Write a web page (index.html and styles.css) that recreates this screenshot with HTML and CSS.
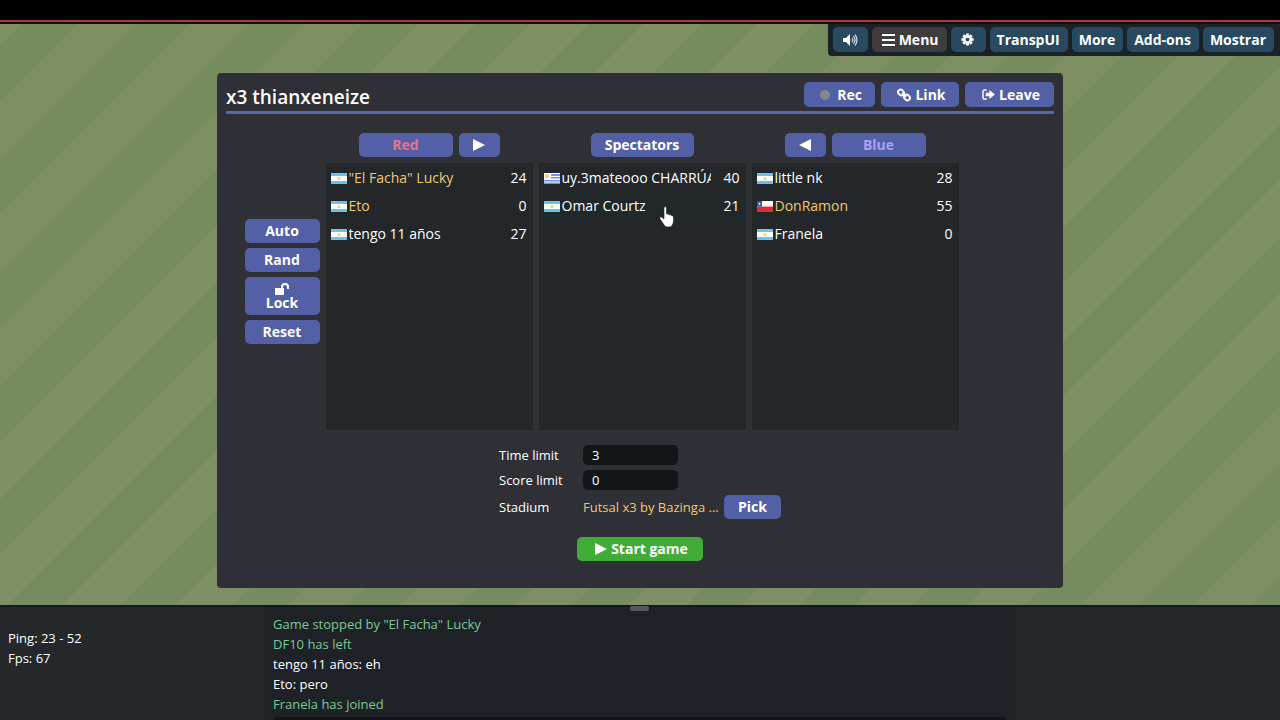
FILE: index.html
```
<!DOCTYPE html>
<html lang="es">
<head>
<meta charset="UTF-8"/>
<meta name="viewport" content="width=device-width,initial-scale=1.0"/>
<title>x3 thianxeneize</title>
<link rel="stylesheet" href="styles.css">
</head>

<body>
<!-- shared flags -->
<svg class="defs" aria-hidden="true">
  <symbol id="flag-ar" viewBox="0 0 16 11"><path fill="#6cc0ea" d="M0 0h16v11H0z"/><path fill="#fff" d="M0 3h16v5H0z"/><circle cx="8" cy="5.500" r="1.500" fill="#e8d66a"/></symbol>
  <symbol id="flag-uy" viewBox="0 0 16 11"><path fill="#fff" d="M0 0h16v11H0z"/><path fill="#7396d0" d="M7 1h9v2H7zM7 4h9v1.500H7zM0 7h16v1.500H0zM0 9.500h16V11H0z"/><circle cx="3" cy="3" r="2" fill="#f0d24e"/></symbol>
  <symbol id="flag-cl" viewBox="0 0 16 11"><path fill="#fff" d="M0 0h16v6H0z"/><path fill="#d8303b" d="M0 5.500h16V11H0z"/><path fill="#2b57a5" d="M0 0h5v5.500H0z"/><circle cx="2.500" cy="2.700" r="1" fill="#fff"/></symbol>
</svg>

<div class="topline"></div>

<main class="field">
  <nav class="toolbar">
    <button class="tool" aria-label="Sound"><svg width="16" height="14" viewBox="0 0 16 14"><path fill="#fff" d="M1 5h3l4-4v12L4 9H1z"/><path d="M10 5q1.500 2 0 4M11.500 3q3 4 0 8M13 1.500q4 5.500 0 11" fill="none" stroke="#dbe3e8" stroke-width="1.200"/></svg></button>
    <button class="tool menu"><svg width="13" height="12" viewBox="0 0 13 12"><path fill="#fff" d="M0 0h13v2H0zM0 5h13v2H0zM0 10h13v2H0z"/></svg>Menu</button>
    <button class="tool" aria-label="Settings"><svg width="13" height="13" viewBox="0 0 14 14"><g fill="#fff"><rect x="5.500" y="0.500" width="3" height="13"/><rect x="5.500" y="0.500" width="3" height="13" transform="rotate(45 7 7)"/><rect x="5.500" y="0.500" width="3" height="13" transform="rotate(90 7 7)"/><rect x="5.500" y="0.500" width="3" height="13" transform="rotate(135 7 7)"/><circle cx="7" cy="7" r="5"/></g><circle cx="7" cy="7" r="2" fill="#274a61"/></svg></button>
    <button class="tool">TranspUI</button>
    <button class="tool">More</button>
    <button class="tool">Add-ons</button>
    <button class="tool">Mostrar</button>
  </nav>

  <section class="dialog">
    <header>
      <h1>x3 thianxeneize</h1>
      <button class="rec"><i class="dot"></i>Rec</button>
      <button class="link"><svg width="14" height="14" viewBox="0 0 14 14"><g fill="none" stroke="#fff" stroke-width="2"><rect x="1" y="2" width="6" height="5" rx="2.500" transform="rotate(45 4 4.500)"/><rect x="7" y="7" width="6" height="5" rx="2.500" transform="rotate(45 10 9.500)"/><path d="M5 5l4 4"/></g></svg>Link</button>
      <button class="leave"><svg width="13" height="11" viewBox="0 0 14 12"><path d="M5 1H3Q1 1 1 3v6q0 2 2 2h2" fill="none" stroke="#fff" stroke-width="1.600"/><path fill="#fff" d="M4 4h4V1l6 5-6 5V8H4z"/></svg>Leave</button>
    </header>

    <div class="teams">
      <div class="tools">
        <button>Auto</button>
        <button>Rand</button>
        <button class="lock"><svg width="14" height="12" viewBox="0 0 14 12"><path fill="#fff" d="M0 5h9v7H0z"/><path d="M7 6V4q0-3 3-3t3 3v2" fill="none" stroke="#fff" stroke-width="2"/></svg>Lock</button>
        <button>Reset</button>
      </div>

      <div class="lists">
        <div class="team">
          <div class="pick-team">
            <button class="side red">Red</button>
            <button class="arrow" aria-label="Move to red"><svg width="12" height="12" viewBox="0 0 12 12"><path fill="#fff" d="M0 0l12 6-12 6z"/></svg></button>
          </div>
          <ul>
            <li class="admin"><svg class="flag"><use href="#flag-ar"/></svg><span>"El Facha" Lucky</span><b>24</b></li>
            <li class="admin"><svg class="flag"><use href="#flag-ar"/></svg><span>Eto</span><b>0</b></li>
            <li><svg class="flag"><use href="#flag-ar"/></svg><span>tengo 11 años</span><b>27</b></li>
          </ul>
        </div>
        <div class="team">
          <div class="pick-team"><button class="spec">Spectators</button></div>
          <ul>
            <li><svg class="flag"><use href="#flag-uy"/></svg><span>uy.3mateooo CHARRÚA</span><b>40</b></li>
            <li class="hover"><svg class="flag"><use href="#flag-ar"/></svg><span>Omar Courtz</span><b>21</b>
              <svg class="cursor" width="16" height="22" viewBox="0 0 16 22"><path fill="#fff" stroke="#222" stroke-width=".6" d="M5 2q0-1.500 1.200-1.500T7.500 2v6q2-.6 2.500.7 2-.3 2.300.8 2-.2 2.200 1.500v4q0 2-1.500 4.500-.6 1.500-3.500 1.500-3 0-4-1.500L1 13q-.8-1.500.5-2t3.500 2z"/></svg>
            </li>
          </ul>
        </div>
        <div class="team">
          <div class="pick-team">
            <button class="arrow" aria-label="Move to blue"><svg width="12" height="12" viewBox="0 0 12 12"><path fill="#fff" d="M12 0v12L0 6z"/></svg></button>
            <button class="side blue">Blue</button>
          </div>
          <ul>
            <li><svg class="flag"><use href="#flag-ar"/></svg><span>little nk</span><b>28</b></li>
            <li class="admin"><svg class="flag"><use href="#flag-cl"/></svg><span>DonRamon</span><b>55</b></li>
            <li><svg class="flag"><use href="#flag-ar"/></svg><span>Franela</span><b>0</b></li>
          </ul>
        </div>
      </div>
    </div>

    <div class="settings">
      <label for="time">Time limit</label><input id="time" value="3">
      <label for="score">Score limit</label><input id="score" value="0">
      <span class="label">Stadium</span><span class="stadium">Futsal x3 by Bazinga ...</span><button>Pick</button>
    </div>
    <button class="start"><svg width="12" height="12" viewBox="0 0 12 12"><path fill="#fff" d="M0 0l12 6-12 6z"/></svg>Start game</button>
  </section>
</main>

<footer>
  <span class="grip"></span>
  <div class="stats">
    <p>Ping: 23 - 52</p>
    <p>Fps: 67</p>
  </div>
  <div class="chat">
    <p class="notice">Game stopped by "El Facha" Lucky</p>
    <p class="notice">DF10 has left</p>
    <p>tengo 11 años: eh</p>
    <p>Eto: pero</p>
    <p class="notice">Franela has joined</p>
    <input aria-label="Chat message">
  </div>
</footer>
</body>
</html>
```
FILE: styles.css
```
:root{
  --panel:#2e3035;--list:#23272a;--btn:#5360a6;--tool:#274a61;
  --admin:#efc96c;--notice:#7fc796;--text:#fff;
}
*,*::before,*::after{box-sizing:border-box;margin:0;padding:0}
body{height:100vh;display:flex;flex-direction:column;overflow:hidden;background:#000;color:var(--text);font:14px/20px "Open Sans",sans-serif}
.defs{position:absolute;width:0;height:0}
button{display:flex;align-items:center;justify-content:center;gap:4px;height:24px;border:0;border-radius:5px;background:var(--btn);color:#fff;font:700 14px/20px "Open Sans",sans-serif;white-space:nowrap;cursor:pointer}
button svg{flex:none}

.topline{flex:none;height:24px;border-bottom:2px solid #14100e;background:linear-gradient(#000 20px,#ab3c46 20px)}

/* pitch with mowed stripes */
.field{flex:1;min-height:0;background:repeating-linear-gradient(135deg,#7e8f63 0 16px,#768c5e 16px 55px,#7e8f63 55px 80px)}

/* toolbar */
.toolbar{display:flex;gap:4px;width:max-content;height:32px;margin-left:auto;padding:3px 6px 4px 5px;background:#1a2225;border-radius:0 0 0 4px}
.tool{height:25px;padding:0 8px 0 7px;background:var(--tool)}
.tool[aria-label]{width:35px}
.menu{padding:0 8px 0 10px;background:#3d3d3e}

/* room dialog */
.dialog{width:min(100%,846px);height:515px;margin:17px auto 0;padding:9px;background:var(--panel);border-radius:4px}
header{display:flex;gap:6px;height:32px;border-bottom:3px solid #5a63ab}
h1{flex:1;font-size:19px;font-weight:600;line-height:30px}
header button{height:25px;padding-left:3px}
.rec{width:71px;gap:7px}
.link{width:78px}
.leave{width:89px}
.dot{width:10px;height:10px;border-radius:50%;background:#85878c}

.teams{display:grid;grid-template-columns:1fr auto 1fr;gap:6px;margin-top:19px;padding-left:4px}
.tools{display:flex;flex-direction:column;justify-content:center;gap:5px;width:75px;justify-self:end}
.lock{flex-direction:column;gap:0;height:38px;line-height:15px}
.lists{display:flex;gap:6px}
.team{width:207px}
.pick-team{display:flex;justify-content:center;gap:6px;margin-bottom:6px}
.side{width:94px}
.red{color:#e8728e}
.blue{color:#aaa2f2}
.arrow{width:41px}
.spec{width:103px}
ul{height:267px;padding-top:1px;background:var(--list);list-style:none}
li{position:relative;display:flex;align-items:center;height:28px;padding:0 6px 0 5px}
li span{flex:1;margin:0 2px;overflow:hidden;white-space:nowrap}
li b{min-width:27px;font-weight:400;text-align:right}
.admin span,.stadium{color:var(--admin)}
.hover{background:#20282a}
.flag{flex:none;width:16px;height:11px}
.cursor{position:absolute;left:120px;top:14px}

/* limits and stadium */
.settings{display:grid;grid-template-columns:84px 141px 57px;align-items:center;justify-content:center;row-gap:5px;margin-top:15px;font-size:13px}
.settings label,.label{grid-column:1}
.settings input{width:95px;height:20px;padding:0 9px;border:0;border-radius:5px;background:#111518;color:#fff;font:inherit}
.stadium{white-space:nowrap}
.start{width:126px;margin:18px auto 0;padding-left:3px;background:#40ab36}

/* stats and chat */
footer{flex:none;position:relative;display:flex;justify-content:center;height:115px;border-top:2px solid #141a1a;background:#24282b;font-size:13px}
.grip{position:absolute;left:calc(50% - 10px);top:-1px;width:19px;height:5px;border-radius:2px;background:#54585a}
.stats{position:absolute;left:8px;top:21px}
.chat{width:752px;padding:7px 9px 0;background:#1e2226}
.chat input{display:block;width:100%;height:24px;margin-top:3px;border:0;border-radius:5px;background:#121418;color:#fff}
.notice{color:var(--notice)}
```
